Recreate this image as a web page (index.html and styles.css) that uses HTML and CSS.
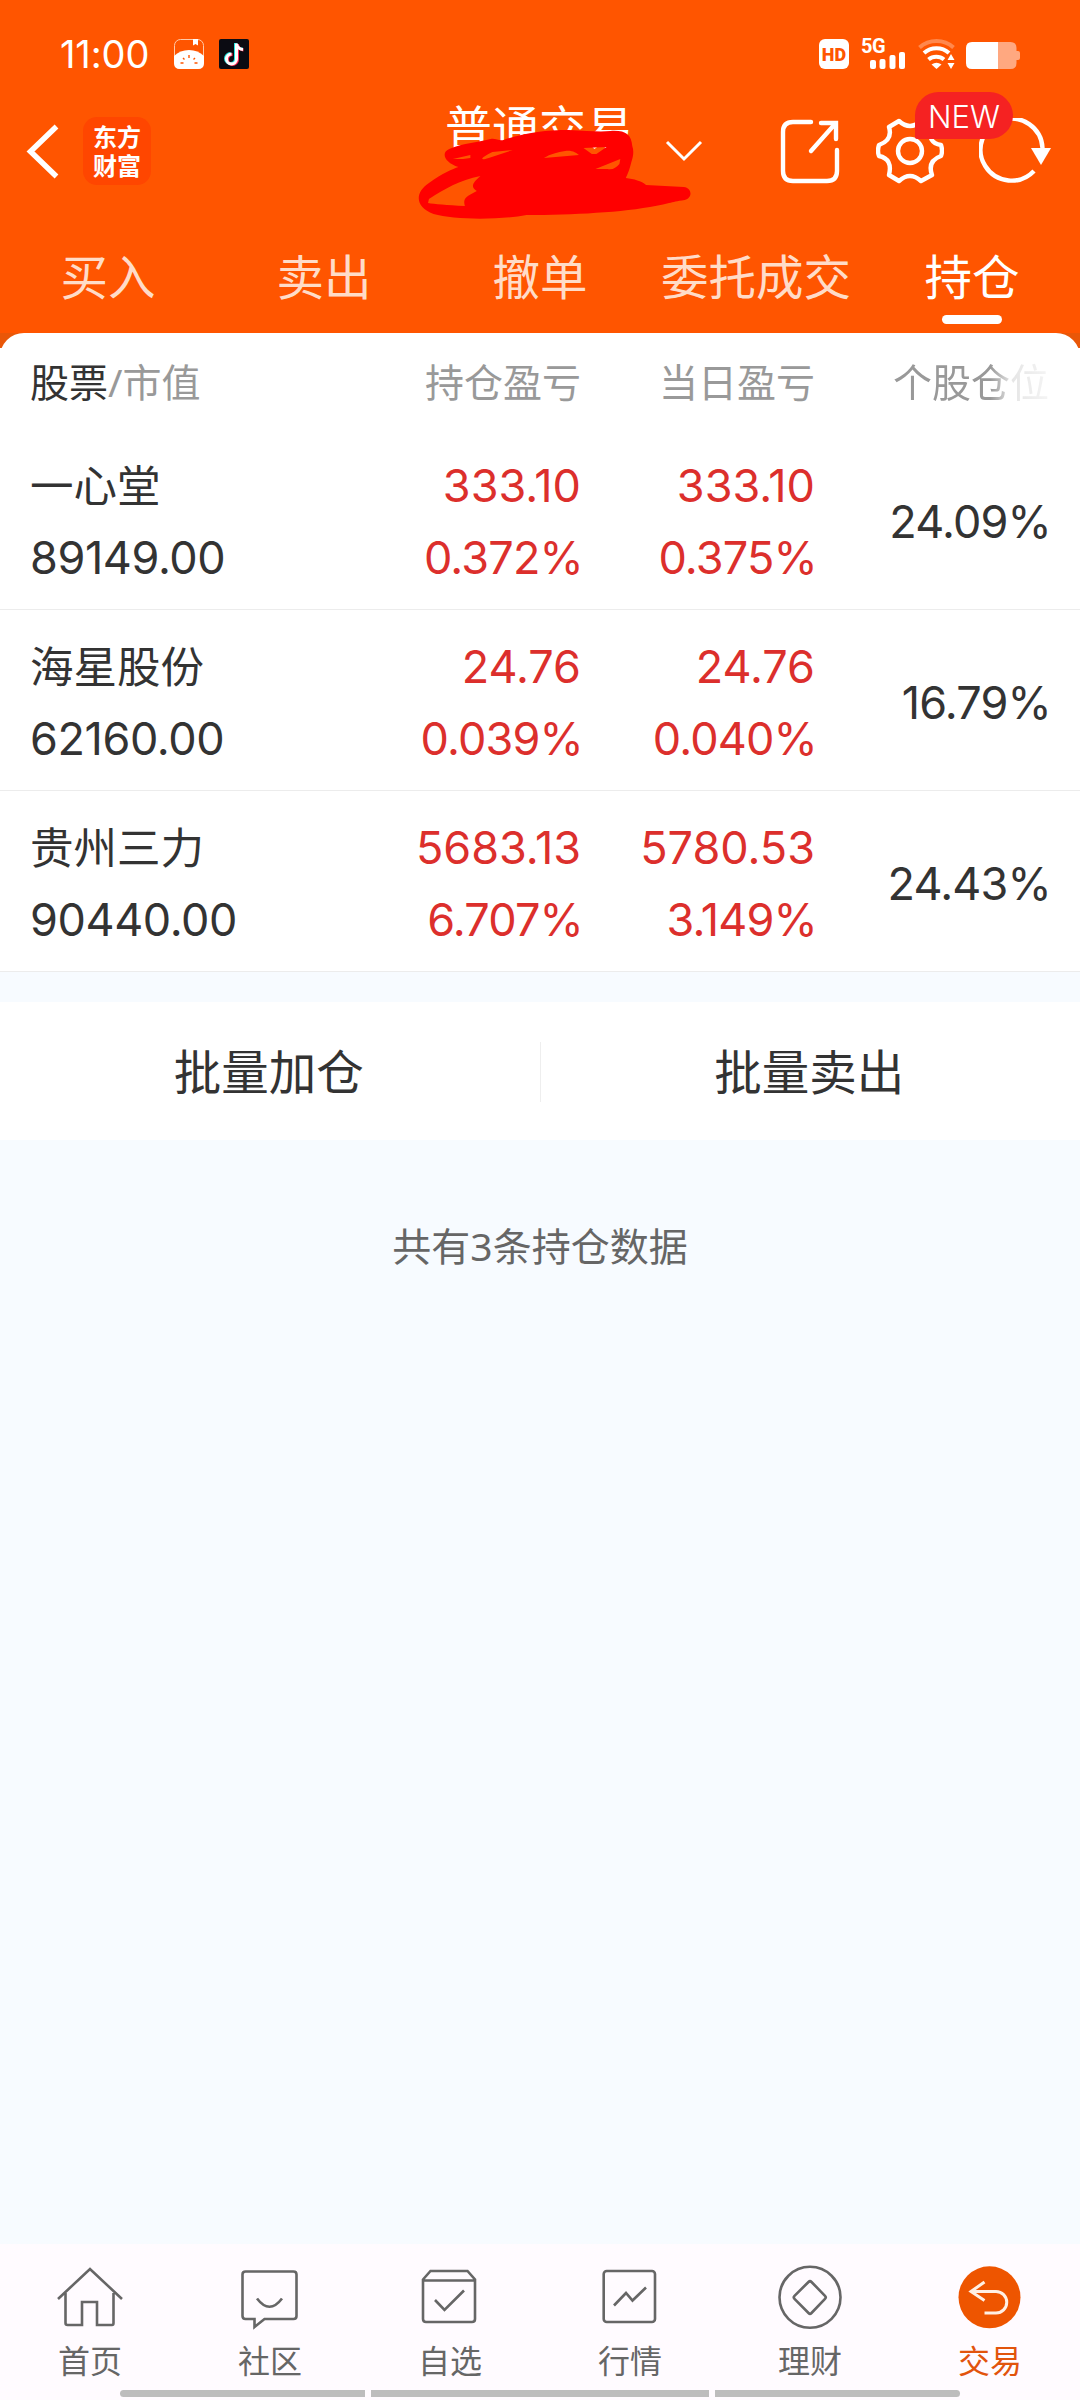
FILE: index.html
```html
<!DOCTYPE html>
<html lang="zh-CN">
<head>
<meta charset="utf-8">
<title>持仓</title>
<link rel="stylesheet" href="styles.css">
</head>
<body>
<div class="app">
  <header class="header">
    <div class="status">
      <span class="clock">11:00</span>
      <svg class="app-note" width="30" height="30" viewBox="0 0 30 30"><rect x=".5" y=".5" width="29" height="29" rx="6" fill="none" stroke="#ffc9a8"/><path d="M19 0h5v6.500l-2.500-1.600L19 6.500z" fill="#fff"/><path d="M0 17C4 13 9 11 15 11s11 2 15 6v7q0 6-6 6H6q-6 0-6-6z" fill="#fff"/><path d="M15 16v3M9 19l1.500 1.500M21 19l-1.500 1.500M6.500 24h3M20.500 24h3" stroke="#f50" stroke-width="1.400"/></svg>
      <svg class="app-video" width="30" height="30" viewBox="0 0 30 30"><rect width="30" height="30" rx="2" fill="#0b0b12"/><g fill="none" stroke-width="3"><path d="M16.500 4v15.500a5 5 0 1 1-5-5M16.500 4.500q1 5 7 5.500" stroke="#25e5df"/><path d="M18.500 5v15.500a5 5 0 1 1-5-5M18.500 5.500q1 5 6 5.500" stroke="#fe2c55"/><path d="M17.500 4.500V20a5 5 0 1 1-5-5M17.500 5q1 5 6.500 5.500" stroke="#fff"/></g></svg>
      <span class="spacer"></span>
      <span class="hd">HD</span>
      <span class="signal"><span class="net">5G</span>
        <svg width="35" height="17" viewBox="0 0 35 17" fill="#fff"><rect y="8" width="6" height="9" rx="2"/><rect x="9.500" y="7" width="6" height="10" rx="2"/><rect x="19.500" y="3" width="6" height="14" rx="2"/><rect x="29" y="0" width="6" height="17" rx="2"/></svg>
      </span>
      <svg class="wifi" width="38" height="30" viewBox="0 0 38 30"><g fill="none" stroke="#fff" stroke-width="4"><path d="M1.500 8.500a25.500 25.500 0 0 1 34 0" stroke-opacity=".3"/><path d="M6 14a18.500 18.500 0 0 1 25 0"/><path d="M10.500 20.500a12 12 0 0 1 15.500 0"/></g><path d="M13.500 25.500q5-3.500 10 0l-5 4.500z" fill="#fff"/><path d="M33 13l5 8.500H28z" fill="#f50"/><path d="M33 15l3.500 6h-7zM33 30l3.500-6h-7z" fill="#fff"/></svg>
      <svg class="battery" width="54" height="27" viewBox="0 0 54 27"><path d="M32 0h12.500q6 0 6 6v3h1.500q2 0 2 2v5q0 2-2 2h-1.500v3q0 6-6 6H32z" fill="#ffa880"/><path d="M6 0h26v27H6q-6 0-6-6V6q0-6 6-6z" fill="#fff"/></svg>
    </div>

    <div class="titlebar">
      <svg class="back" width="36" height="60" viewBox="0 0 36 60"><path d="M31.500 5.500L5.500 30.500l26 25" fill="none" stroke="#fff" stroke-width="5.500"/></svg>
      <div class="logo"><span>东方</span><span>财富</span></div>
      <div class="account">普通交易
        <svg class="scribble" width="276" height="92" viewBox="0 0 300 92" preserveAspectRatio="none"><path fill="red" fill-rule="evenodd" d="M94 10C115 3 140 0 165 0C185 1 200 2 210 1C226 0 233 4 234 16C236 21 235 27 233 32C231 40 229 44 227 48C236 49 244 51 249 55L290 57C299 58 300 68 291 70C282 71 279 72 274 73C240 81 190 84 138 85L119 85C90 90 40 90 18 84C-2 77 -3 63 13 53C28 43 39 39 45 37C31 33 25 23 35 19C50 13 68 12 80 9C85 8 89 11 94 10zM58 28L50 29L39 29L58 25zM78 28C65 32 72 26 82 22L104 20zM181 18L206 17L195 24L190 24zM138 28C145 24 153 22 161 21C169 20 173 23 176 25zM194 39L221 29L220 34C216 38 213 40 207 39zM13 69C30 59 46 50 69 46C60 53 58 57 65 61C52 67 50 69 52 76C32 75 19 74 12 73z"/></svg>
      </div>
      <svg class="drop" width="38" height="22" viewBox="0 0 38 22"><path d="M2 2l17 17L36 2" fill="none" stroke="#fff" stroke-width="3"/></svg>
      <span class="spacer"></span>
      <svg class="share" width="60" height="66" viewBox="0 0 60 66" fill="none" stroke="#fff" stroke-width="4.400" stroke-linecap="round"><path d="M31 4H13Q3 4 3 14V53Q3 63 13 63H47Q57 63 57 53V32"/><path d="M31 33L55 6M41 5H56V21"/></svg>
      <div class="settings">
        <svg width="68" height="66" viewBox="0 0 68 66" fill="none" stroke="#fff" stroke-width="4.400"><path d="M23 3Q34 13 45 3L55 9Q51 25 65 27Q67 33 65 38Q51 43 56 57L45 63Q34 53 23 63L13 57Q17 41 3 38Q1 33 3 27Q17 22 13 9Z" stroke-linejoin="round"/><circle cx="34" cy="33" r="12"/></svg>
        <span class="badge">NEW</span>
      </div>
      <svg class="refresh" width="72" height="66" viewBox="0 0 72 66"><path d="M63.500 30A31 31 0 1 0 55 53" fill="none" stroke="#fff" stroke-width="4.400"/><path d="M52 30H72L62 47z" fill="#fff"/></svg>
    </div>

    <nav class="tabs">
      <a class="tab">买入</a><a class="tab">卖出</a><a class="tab">撤单</a><a class="tab">委托成交</a><a class="tab tab-active">持仓</a>
    </nav>
  </header>

  <main class="main">
    <div class="panel-wrap">
      <section class="panel">
        <div class="thead">
          <span class="first"><b>股票</b>/市值</span><span>持仓盈亏</span><span>当日盈亏</span><span class="fade">个股仓位</span>
        </div>
        <div class="row">
          <div class="cell name"><span>一心堂</span><span class="num">89149.00</span></div>
          <div class="cell up"><span>333.10</span><span class="pct">0.372%</span></div>
          <div class="cell up"><span>333.10</span><span class="pct">0.375%</span></div>
          <div class="cell"><span class="pct">24.09%</span></div>
        </div>
        <div class="row">
          <div class="cell name"><span>海星股份</span><span class="num">62160.00</span></div>
          <div class="cell up"><span>24.76</span><span class="pct">0.039%</span></div>
          <div class="cell up"><span>24.76</span><span class="pct">0.040%</span></div>
          <div class="cell"><span class="pct">16.79%</span></div>
        </div>
        <div class="row">
          <div class="cell name"><span>贵州三力</span><span class="num">90440.00</span></div>
          <div class="cell up"><span>5683.13</span><span class="pct">6.707%</span></div>
          <div class="cell up"><span>5780.53</span><span class="pct">3.149%</span></div>
          <div class="cell"><span class="pct">24.43%</span></div>
        </div>
      </section>
    </div>
    <div class="actions"><button class="action">批量加仓</button><i class="divider"></i><button class="action">批量卖出</button></div>
    <p class="count">共有3条持仓数据</p>
  </main>

  <footer class="footer">
    <nav class="nav">
      <a class="item"><svg width="72" height="72" viewBox="0 0 72 72"><path d="M4 37L36 7l32 30M11.500 31v30q0 2 2 2H28V40H43V63H58q1.500 0 1.500-2V31"/></svg>首页</a>
      <a class="item"><svg width="72" height="72" viewBox="0 0 72 72"><path d="M11.500 9.500h48q3 0 3 3V54q0 3-3 3h-29L20.500 65V57h-9q-3 0-3-3V12.500q0-3 3-3zM23 36.500q12.500 16.500 25 0"/></svg>社区</a>
      <a class="item"><svg width="72" height="72" viewBox="0 0 72 72"><path d="M9 17.500l7.500-8.500h37l7.500 8.500V57q0 3-3 3H12q-3 0-3-3zM9 18.500h52M21 38l9.500 10L50 28.500"/></svg>自选</a>
      <a class="item"><svg width="72" height="72" viewBox="0 0 72 72"><rect x="9.700" y="9" width="51.300" height="51" rx="3"/><path d="M20 43.500l12-12.500 6.500 7.500L52 25.500"/></svg>行情</a>
      <a class="item"><svg width="72" height="72" viewBox="0 0 72 72"><circle cx="36" cy="35.300" r="30.500"/><path d="M34.500 20q1.500-1.500 3 0L51 33.800q1.500 1.500 0 3L37.500 51q-1.500 1.500-3 0L20.500 36.800q-1.500-1.500 0-3z"/></svg>理财</a>
      <a class="item item-active"><svg width="72" height="72" viewBox="0 0 72 72"><circle class="disc" cx="35.500" cy="35.300" r="31"/><path class="arrow" d="M30.500 20L17 29.500l13.500 9M18 29.500H42a10.700 10.700 0 0 1 0 21.500H30.500"/></svg>交易</a>
    </nav>
    <div class="handles"><i class="handle left"></i><i class="handle middle"></i><i class="handle right"></i></div>
  </footer>
</div>
</body>
</html>
```
FILE: styles.css
```css
* { box-sizing: border-box; }
body { margin: 0; background: #f7fbff; font-family: "Noto Sans", "Noto Sans CJK SC", sans-serif; color: #333; }
.app { width: 1080px; height: 2400px; display: flex; flex-direction: column; overflow: hidden; }
svg { display: block; flex: none; }
.spacer { flex: 1; }

.header { height: 333px; background: #ff5500; color: #fff; }
.status { height: 108px; display: flex; align-items: center; padding: 0 60px; }
.clock { width: 114px; font-family: Inter, sans-serif; font-size: 38px; line-height: 40px; letter-spacing: -0.1px; white-space: nowrap; }
.app-video { margin-left: 15px; }
.hd { width: 30px; height: 30px; border-radius: 6px; background: #fff; color: #ff5500; font: 900 18px/31px Roboto, sans-serif; text-align: center; }
.signal { width: 45px; height: 30px; margin-left: 12px; display: flex; flex-direction: column; }
.net { font: 700 20px/14px Roboto, sans-serif; height: 13px; letter-spacing: -0.5px; }
.signal svg { margin-left: 9px; }
.wifi { margin-left: 12px; }
.battery { margin: 3px 0 0 10px; }

.titlebar { height: 86px; display: flex; align-items: center; padding: 0 29px 0 25px; }
.logo { width: 68px; height: 68px; margin-left: 22px; border-radius: 14px; background: #ff4600; display: flex; flex-direction: column; align-items: center; padding-top: 4px; font: 700 24px/29px "Noto Sans CJK SC", sans-serif; }
.account { position: relative; align-self: flex-start; width: 188px; margin-left: 294px; font-size: 47px; line-height: 38px; white-space: nowrap; }
.scribble { position: absolute; left: -28px; top: 22px; }
.drop { margin-left: 32px; }
.settings { position: relative; margin-left: 36px; }
.badge { position: absolute; left: 39px; top: -26px; width: 98px; height: 47px; border-radius: 24px 24px 24px 2px; background: #f52222; font: 300 31px/49px Inter, sans-serif; text-align: center; }
.refresh { margin-left: 35px; }

.tabs { height: 139px; display: grid; grid-template-columns: repeat(5, 1fr); padding-top: 53px; font-size: 47.5px; line-height: 60px; }
.tab { display: flex; flex-direction: column; align-items: center; color: #ffdcc8; }
.tab-active { color: #fff; }
.tab-active::after { content: ""; width: 60px; height: 9px; margin-top: 8px; border-radius: 5px; background: #fff; }

.main { flex: 1; }
.panel-wrap { background: linear-gradient(#e95708 15px, #fff 15px); }
.panel { background: #fff; border-radius: 24px 24px 0 0; }
.thead, .row { display: grid; grid-template-columns: 1fr 234px 234px 234px; padding: 0 31px 0 30px; text-align: right; }
.thead { height: 96px; padding-top: 20px; font-size: 39px; line-height: 58px; color: #999; }
.thead .first { text-align: left; }
.thead b { font-weight: 400; color: #333; }
.fade { -webkit-mask-image: linear-gradient(90deg, #000 75%, rgba(0,0,0,.25) 84%, rgba(0,0,0,.1)); mask-image: linear-gradient(90deg, #000 75%, rgba(0,0,0,.25) 84%, rgba(0,0,0,.1)); }
.row { height: 181px; padding-top: 5px; border-bottom: 1px solid #ececec; align-items: center; }
.cell { display: flex; flex-direction: column; font-family: Inter, "Noto Sans CJK SC", sans-serif; font-size: 45px; line-height: 72px; letter-spacing: 0; }
.name { text-align: left; }
.name span:first-child { font-size: 43.5px; }
.num { letter-spacing: -0.4px; }
.pct { margin-right: -2px; letter-spacing: -0.8px; }
.up { color: #dc2f2c; }

.actions { height: 138px; margin-top: 30px; padding-top: 2px; display: flex; align-items: center; background: #fff; }
.action { flex: 1; border: 0; padding: 0 2px 0 0; background: none; font: inherit; font-size: 47.5px; line-height: 60px; color: #333; }
.divider { width: 1px; height: 60px; background: #eee; }
.count { margin: 76px 0 0; text-align: center; font-size: 39px; line-height: 60px; color: #666; }

.footer { height: 156px; padding-top: 18px; background: #fffbff; }
.nav { height: 128px; display: grid; grid-template-columns: repeat(6, 1fr); }
.item { display: flex; flex-direction: column; align-items: center; font-size: 32px; line-height: 54px; color: #666; }
.item svg { fill: none; stroke: #666; stroke-width: 2.6; }
.item-active { color: #e2540c; }
.item .disc { fill: #ee5500; stroke: none; }
.item .arrow { stroke: #fff0e4; stroke-width: 3; }
.handles { display: flex; gap: 6px; justify-content: center; }
.handle { height: 7px; width: 245px; background: #bdbdbd; }
.handle.middle { width: 338px; }
.handle.left { border-radius: 4px 0 0 4px; }
.handle.right { border-radius: 0 4px 4px 0; }
```
